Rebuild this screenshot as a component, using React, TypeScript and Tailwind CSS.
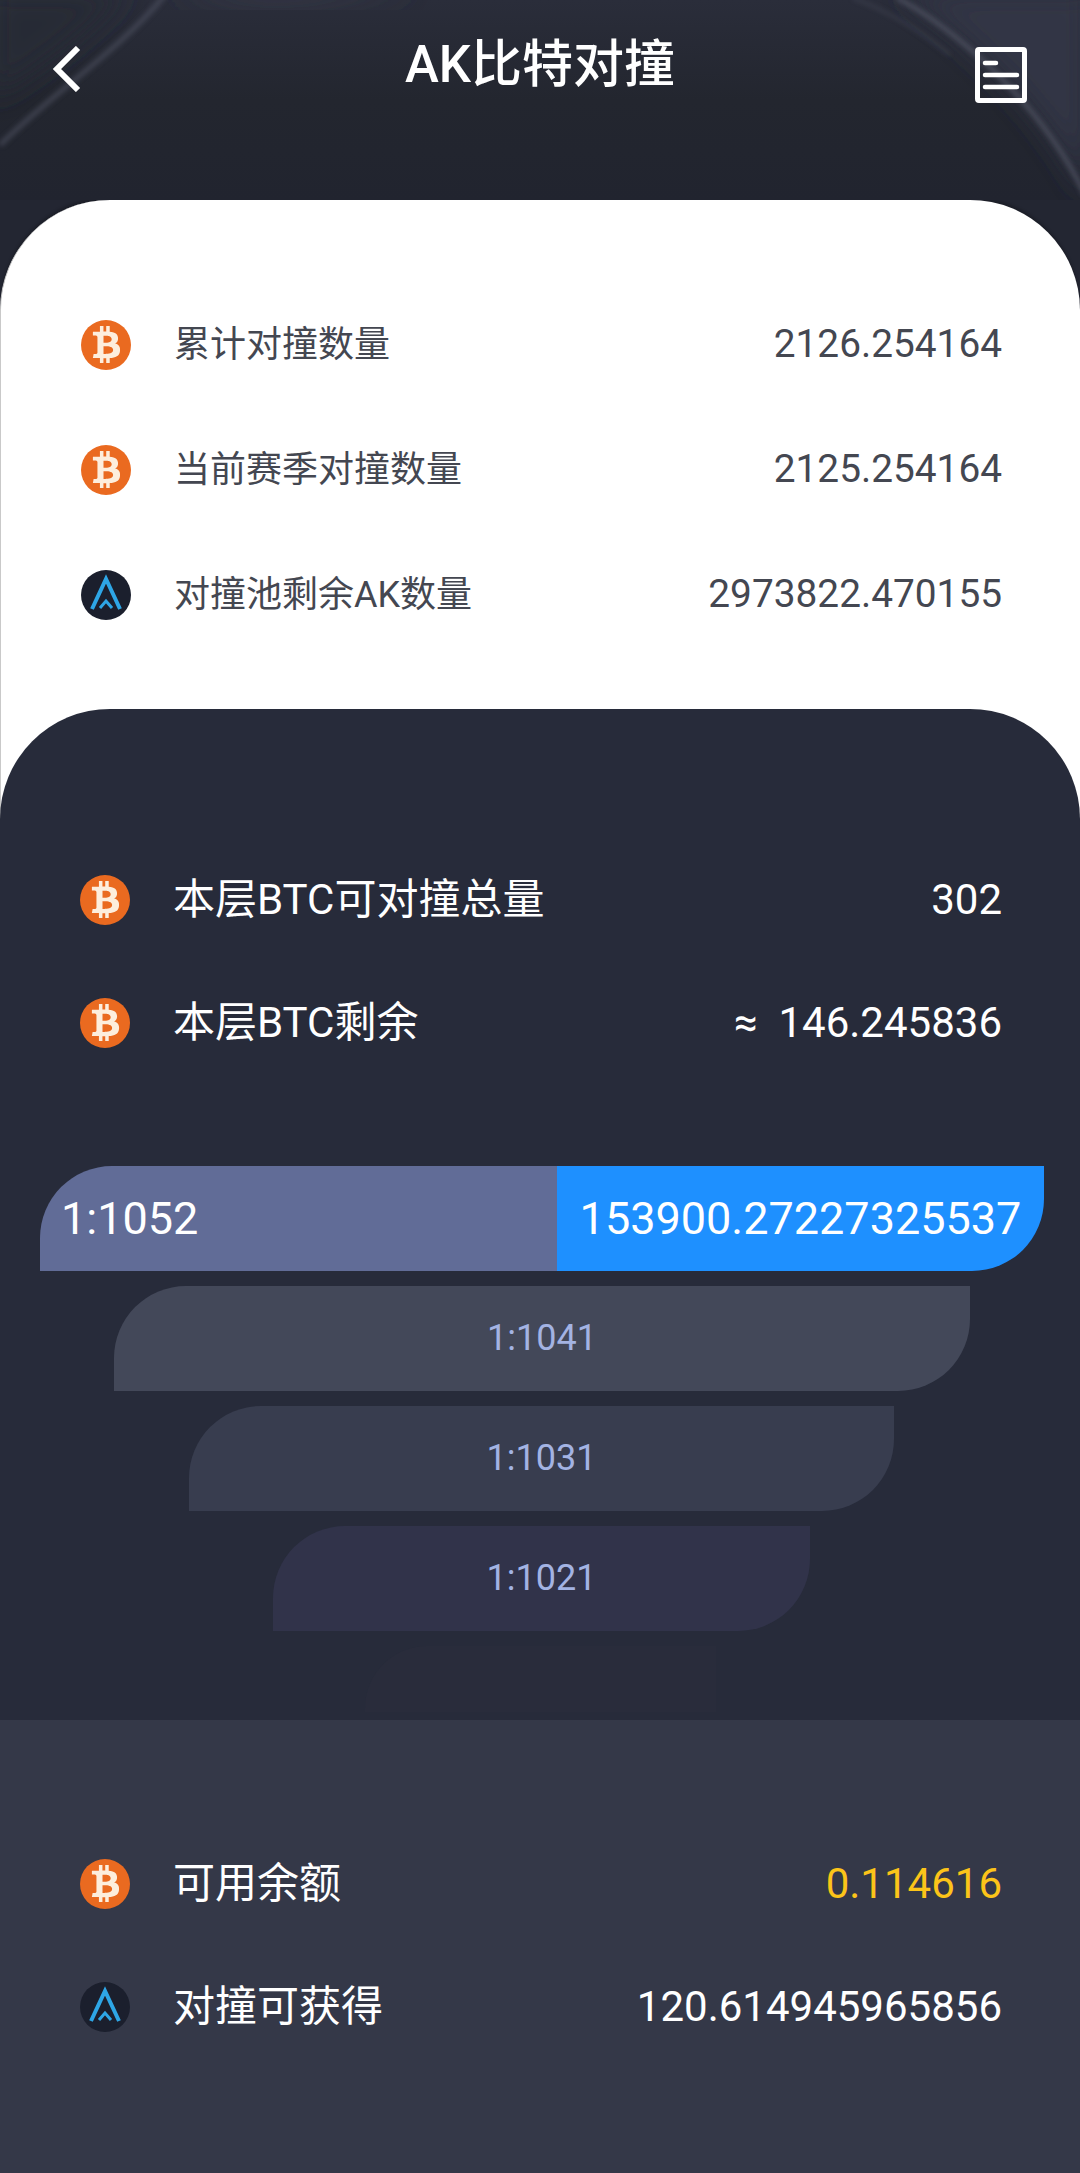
import { FaBtc } from "react-icons/fa";

function BtcIcon() {
  return (
    <div className="flex h-[50px] w-[50px] shrink-0 items-center justify-center rounded-full bg-[#ea6a20] text-[#fdeedd]">
      <FaBtc className="h-[37px] w-[37px]" />
    </div>
  );
}

function AkIcon() {
  return (
    <svg viewBox="0 0 50 50" className="h-[50px] w-[50px] shrink-0">
      <circle cx="25" cy="25" r="25" fill="#1b1f2d" />
      <path d="M11 39 L25 9 L39 39" fill="none" stroke="#2ea6e6" strokeWidth="4" />
      <path d="M19 38 L25 31 L31 38" fill="none" stroke="#2ea6e6" strokeWidth="3" />
    </svg>
  );
}

function Row({
  icon,
  label,
  value,
  className,
  labelClassName,
  valueClassName,
}: {
  icon: React.ReactNode;
  label: string;
  value: string;
  className: string;
  labelClassName?: string;
  valueClassName?: string;
}) {
  return (
    <div className={`flex items-center pl-[80px] pr-[78px] ${className}`}>
      {icon}
      <span className={`ml-[43px] ${labelClassName ?? ""}`}>{label}</span>
      <span className={`ml-auto ${valueClassName ?? ""}`}>{value}</span>
    </div>
  );
}

const tiers = [
  { label: "1:1041", box: "ml-[114px] mr-[110px] bg-[#434859]" },
  { label: "1:1031", box: "ml-[189px] mr-[186px] bg-[#383d4f]" },
  { label: "1:1021", box: "ml-[273px] mr-[270px] bg-[#31334a]" },
];

export default function App() {
  return (
    <div className="flex h-[2173px] w-[1080px] flex-col overflow-hidden bg-[#232632] font-['Roboto','Noto_Sans_CJK_SC',sans-serif]">
      <header className="relative h-[200px] shrink-0 overflow-hidden bg-gradient-to-b from-[#2a2d3a] via-[#23262f] to-[#21242f]">
        {/* streaks of light behind the title */}
        <svg viewBox="0 0 1080 200" className="absolute inset-0 h-full w-full">
          <defs>
            <filter id="soft" x="-20%" y="-20%" width="140%" height="140%">
              <feGaussianBlur stdDeviation="2.5" />
            </filter>
            <filter id="haze" x="-30%" y="-30%" width="160%" height="160%">
              <feGaussianBlur stdDeviation="14" />
            </filter>
          </defs>
          <path d="M897 -10 C950 25 1040 100 1090 200 L1090 -10 Z" fill="#333544" filter="url(#haze)" />
          <path d="M130 -10 Q60 60 -10 100 L-10 -10 Z" fill="#262936" filter="url(#haze)" />
          <path d="M170 -10 Q260 20 420 -10 Z" fill="#383b4a" filter="url(#haze)" />
          <path d="M0 145 C50 95 120 50 165 -5" fill="none" stroke="#565a6a" strokeWidth="5" opacity="0.55" filter="url(#soft)" />
          <path d="M897 -2 C950 25 1040 100 1085 195" fill="none" stroke="#5b5f6e" strokeWidth="4" opacity="0.7" filter="url(#soft)" />
          <path d="M853 -2 Q900 15 950 55" fill="none" stroke="#4b4e5d" strokeWidth="3" opacity="0.45" filter="url(#soft)" />
        </svg>
        <svg viewBox="0 0 30 46" className="absolute left-[52px] top-[46px] h-[46px] w-[30px]">
          <path d="M26 2 L5 23 L26 44" fill="none" stroke="#fff" strokeWidth="6" />
        </svg>
        <h1 className="relative pt-[36px] text-center text-[51px] font-medium leading-[58px] text-white">AK比特对撞</h1>
        <svg viewBox="0 0 52 56" className="absolute left-[975px] top-[47px] h-[56px] w-[52px]">
          <rect x="2.5" y="2.5" width="47" height="51" rx="1.5" fill="none" stroke="#fff" strokeWidth="5" />
          <path d="M10 16 H21 M10 28 H42 M10 40 H42" stroke="#fff" strokeWidth="4.5" strokeLinecap="round" />
        </svg>
      </header>

      <main className="flex flex-1 flex-col rounded-t-[110px] border-l border-[#c9c9c9] bg-white pt-[82px] shadow-[0_-3px_3px_rgba(0,0,0,0.2)]">
        <div className="mb-[52px] text-[#444751]">
          <Row icon={<BtcIcon />} label="累计对撞数量" value="2126.254164" className="h-[125px]" labelClassName="text-[36px]" valueClassName="text-[38.8px]" />
          <Row icon={<BtcIcon />} label="当前赛季对撞数量" value="2125.254164" className="h-[125px]" labelClassName="text-[36px]" valueClassName="text-[38.8px]" />
          <Row icon={<AkIcon />} label="对撞池剩余AK数量" value="2973822.470155" className="h-[125px]" labelClassName="text-[36px]" valueClassName="text-[38.8px]" />
        </div>

        <section className="-ml-px flex flex-1 flex-col rounded-t-[110px] bg-[#272b3a]">
          <div className="pt-[129px] text-[42px] text-white">
            <Row icon={<BtcIcon />} label="本层BTC可对撞总量" value="302" className="h-[123px]" />
            <Row icon={<BtcIcon />} label="本层BTC剩余" value="≈  146.245836" className="h-[123px] whitespace-pre" />
          </div>

          <div className="mt-[82px] flex flex-col gap-[15px]">
            <div className="ml-[40px] mr-[36px] flex h-[105px] items-stretch overflow-hidden rounded-tl-[72px] rounded-br-[72px] text-[45px] text-white">
              <div className="flex w-[517px] items-center bg-[#616c97] pl-[21px]">1:1052</div>
              <div className="flex flex-1 items-center justify-center bg-[#1e90ff]">153900.27227325537</div>
            </div>
            {tiers.map((tier) => (
              <div
                key={tier.label}
                className={`flex h-[105px] items-center justify-center rounded-tl-[72px] rounded-br-[72px] pb-[2px] text-[36px] text-[#a3b3e3] ${tier.box}`}
              >
                {tier.label}
              </div>
            ))}
            <div className="ml-[365px] mr-[364px] h-[66px] rounded-tl-[62px] bg-[#292c3b]" />
          </div>

          <footer className="mt-[8px] flex-1 bg-[#343848] pt-[102px] text-[42px] text-white">
            <Row icon={<BtcIcon />} label="可用余额" value="0.114616" className="h-[123px]" valueClassName="text-[#fcc419]" />
            <Row icon={<AkIcon />} label="对撞可获得" value="120.614945965856" className="h-[123px]" />
          </footer>
        </section>
      </main>
    </div>
  );
}
